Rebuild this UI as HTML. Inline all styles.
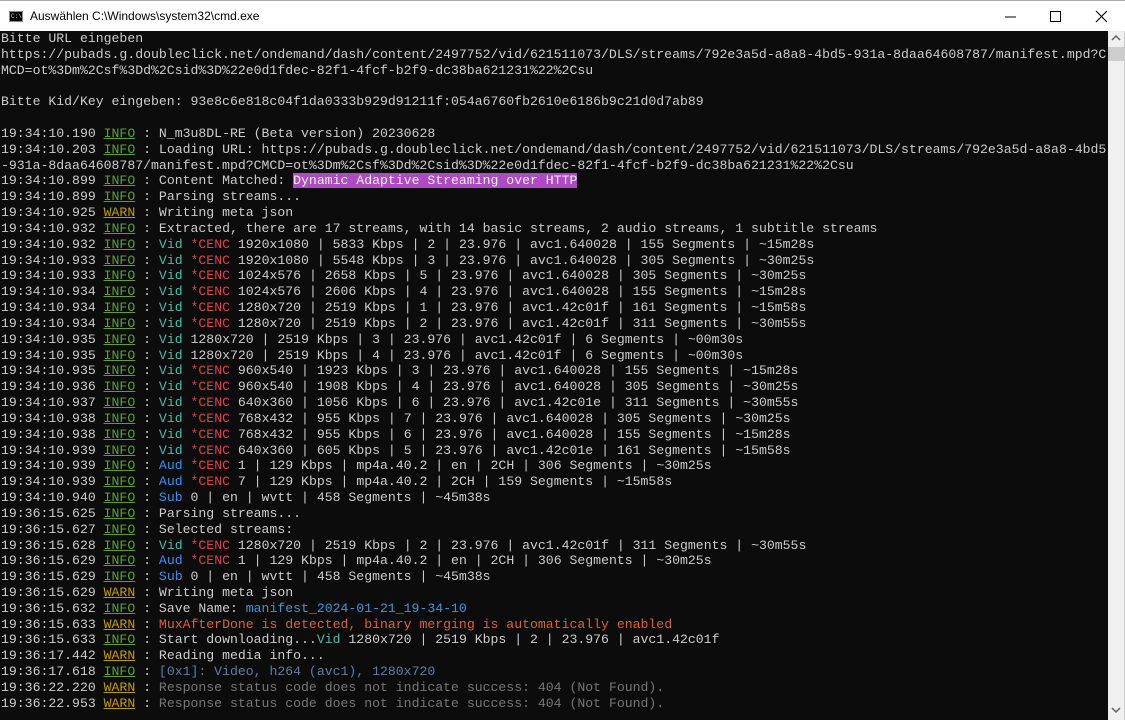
<!DOCTYPE html>
<html><head><meta charset="utf-8"><style>
*{margin:0;padding:0;box-sizing:border-box}
body{width:1125px;height:720px;overflow:hidden;background:#fff;position:relative;font-family:"Liberation Sans",sans-serif}
#tb{position:absolute;left:0;top:0;width:1125px;height:31px;background:#fff;border-top:1px solid #aaa}
#tb .t{position:absolute;left:30px;top:8px;font-size:12px;color:#000}
#ic{position:absolute;left:9px;top:10px;width:14px;height:11px;background:#000;border:1px solid #888}
#ic:after{content:"C:\\";position:absolute;left:1px;top:1px;font-size:6px;color:#ccc;font-family:"Liberation Mono",monospace}
#con{position:absolute;left:0;top:31px;width:1108px;height:689px;background:#0c0c0c;overflow:hidden}
pre{font-family:"Liberation Mono",monospace;font-size:13.17px;line-height:15.83px;color:#cccccc;padding-left:1px;white-space:pre}
.i{color:#4e9a06;text-decoration:underline;color:#5f9e2f}
.w{color:#c19c00;text-decoration:underline}
.v{color:#4fb9b0}
.r{color:#e0404a}
.a{color:#3b8eea}
.m{background:#b148c6;color:#f2f2f2}
.s{color:#3a96dd}
.o{color:#e0602a}
.g{color:#767676}
.d{color:#5a7fa8}
#sb{position:absolute;left:1108px;top:31px;width:17px;height:689px;background:#f0f0f0;border-right:1px solid #ccc}
#th{position:absolute;left:1108px;top:47px;width:16px;height:14px;background:#cdcdcd}
</style></head><body>
<div id="tb"><div id="ic"></div><div class="t">Auswählen C:\Windows\system32\cmd.exe</div>
<svg style="position:absolute;left:995px;top:8px" width="120" height="16"><line x1="10" y1="8" x2="21" y2="8" stroke="#000" stroke-width="1"/><rect x="55.5" y="2.5" width="10" height="10" fill="none" stroke="#000"/><path d="M101 2 L112 13 M112 2 L101 13" stroke="#000" stroke-width="1.1"/></svg></div>
<div id="con"><pre>Bitte URL eingeben
https://pubads.g.doubleclick.net/ondemand/dash/content/2497752/vid/621511073/DLS/streams/792e3a5d-a8a8-4bd5-931a-8daa64608787/manifest.mpd?C
MCD=ot%3Dm%2Csf%3Dd%2Csid%3D%22e0d1fdec-82f1-4fcf-b2f9-dc38ba621231%22%2Csu

Bitte Kid/Key eingeben: 93e8c6e818c04f1da0333b929d91211f:054a6760fb2610e6186b9c21d0d7ab89

19:34:10.190 <span class="i">INFO</span> : N_m3u8DL-RE (Beta version) 20230628
19:34:10.203 <span class="i">INFO</span> : Loading URL: https://pubads.g.doubleclick.net/ondemand/dash/content/2497752/vid/621511073/DLS/streams/792e3a5d-a8a8-4bd5
-931a-8daa64608787/manifest.mpd?CMCD=ot%3Dm%2Csf%3Dd%2Csid%3D%22e0d1fdec-82f1-4fcf-b2f9-dc38ba621231%22%2Csu
19:34:10.899 <span class="i">INFO</span> : Content Matched: <span class="m">Dynamic Adaptive Streaming over HTTP</span>
19:34:10.899 <span class="i">INFO</span> : Parsing streams...
19:34:10.925 <span class="w">WARN</span> : Writing meta json
19:34:10.932 <span class="i">INFO</span> : Extracted, there are 17 streams, with 14 basic streams, 2 audio streams, 1 subtitle streams
19:34:10.932 <span class="i">INFO</span> : <span class="v">Vid</span> <span class="r">*CENC</span> 1920x1080 | 5833 Kbps | 2 | 23.976 | avc1.640028 | 155 Segments | ~15m28s
19:34:10.933 <span class="i">INFO</span> : <span class="v">Vid</span> <span class="r">*CENC</span> 1920x1080 | 5548 Kbps | 3 | 23.976 | avc1.640028 | 305 Segments | ~30m25s
19:34:10.933 <span class="i">INFO</span> : <span class="v">Vid</span> <span class="r">*CENC</span> 1024x576 | 2658 Kbps | 5 | 23.976 | avc1.640028 | 305 Segments | ~30m25s
19:34:10.934 <span class="i">INFO</span> : <span class="v">Vid</span> <span class="r">*CENC</span> 1024x576 | 2606 Kbps | 4 | 23.976 | avc1.640028 | 155 Segments | ~15m28s
19:34:10.934 <span class="i">INFO</span> : <span class="v">Vid</span> <span class="r">*CENC</span> 1280x720 | 2519 Kbps | 1 | 23.976 | avc1.42c01f | 161 Segments | ~15m58s
19:34:10.934 <span class="i">INFO</span> : <span class="v">Vid</span> <span class="r">*CENC</span> 1280x720 | 2519 Kbps | 2 | 23.976 | avc1.42c01f | 311 Segments | ~30m55s
19:34:10.935 <span class="i">INFO</span> : <span class="v">Vid</span> 1280x720 | 2519 Kbps | 3 | 23.976 | avc1.42c01f | 6 Segments | ~00m30s
19:34:10.935 <span class="i">INFO</span> : <span class="v">Vid</span> 1280x720 | 2519 Kbps | 4 | 23.976 | avc1.42c01f | 6 Segments | ~00m30s
19:34:10.935 <span class="i">INFO</span> : <span class="v">Vid</span> <span class="r">*CENC</span> 960x540 | 1923 Kbps | 3 | 23.976 | avc1.640028 | 155 Segments | ~15m28s
19:34:10.936 <span class="i">INFO</span> : <span class="v">Vid</span> <span class="r">*CENC</span> 960x540 | 1908 Kbps | 4 | 23.976 | avc1.640028 | 305 Segments | ~30m25s
19:34:10.937 <span class="i">INFO</span> : <span class="v">Vid</span> <span class="r">*CENC</span> 640x360 | 1056 Kbps | 6 | 23.976 | avc1.42c01e | 311 Segments | ~30m55s
19:34:10.938 <span class="i">INFO</span> : <span class="v">Vid</span> <span class="r">*CENC</span> 768x432 | 955 Kbps | 7 | 23.976 | avc1.640028 | 305 Segments | ~30m25s
19:34:10.938 <span class="i">INFO</span> : <span class="v">Vid</span> <span class="r">*CENC</span> 768x432 | 955 Kbps | 6 | 23.976 | avc1.640028 | 155 Segments | ~15m28s
19:34:10.939 <span class="i">INFO</span> : <span class="v">Vid</span> <span class="r">*CENC</span> 640x360 | 605 Kbps | 5 | 23.976 | avc1.42c01e | 161 Segments | ~15m58s
19:34:10.939 <span class="i">INFO</span> : <span class="a">Aud</span> <span class="r">*CENC</span> 1 | 129 Kbps | mp4a.40.2 | en | 2CH | 306 Segments | ~30m25s
19:34:10.939 <span class="i">INFO</span> : <span class="a">Aud</span> <span class="r">*CENC</span> 7 | 129 Kbps | mp4a.40.2 | 2CH | 159 Segments | ~15m58s
19:34:10.940 <span class="i">INFO</span> : <span class="a">Sub</span> 0 | en | wvtt | 458 Segments | ~45m38s
19:36:15.625 <span class="i">INFO</span> : Parsing streams...
19:36:15.627 <span class="i">INFO</span> : Selected streams:
19:36:15.628 <span class="i">INFO</span> : <span class="v">Vid</span> <span class="r">*CENC</span> 1280x720 | 2519 Kbps | 2 | 23.976 | avc1.42c01f | 311 Segments | ~30m55s
19:36:15.629 <span class="i">INFO</span> : <span class="a">Aud</span> <span class="r">*CENC</span> 1 | 129 Kbps | mp4a.40.2 | en | 2CH | 306 Segments | ~30m25s
19:36:15.629 <span class="i">INFO</span> : <span class="a">Sub</span> 0 | en | wvtt | 458 Segments | ~45m38s
19:36:15.629 <span class="w">WARN</span> : Writing meta json
19:36:15.632 <span class="i">INFO</span> : Save Name: <span class="s">manifest_2024-01-21_19-34-10</span>
19:36:15.633 <span class="w">WARN</span> : <span class="o">MuxAfterDone is detected, binary merging is automatically enabled</span>
19:36:15.633 <span class="i">INFO</span> : Start downloading...<span class="v">Vid</span> 1280x720 | 2519 Kbps | 2 | 23.976 | avc1.42c01f
19:36:17.442 <span class="w">WARN</span> : Reading media info...
19:36:17.618 <span class="i">INFO</span> : <span class="d">[0x1]: Video, h264 (avc1), 1280x720</span>
19:36:22.220 <span class="w">WARN</span> : <span class="g">Response status code does not indicate success: 404 (Not Found).</span>
19:36:22.953 <span class="w">WARN</span> : <span class="g">Response status code does not indicate success: 404 (Not Found).</span>
</pre></div>
<div id="sb"></div><div id="th"></div>
<svg style="position:absolute;left:1110px;top:34px" width="12" height="8"><path d="M2 6 L6 2 L10 6" stroke="#606060" stroke-width="1.5" fill="none"/></svg>
<svg style="position:absolute;left:1110px;top:706px" width="12" height="8"><path d="M2 2 L6 6 L10 2" stroke="#606060" stroke-width="1.5" fill="none"/></svg>
</body></html>
